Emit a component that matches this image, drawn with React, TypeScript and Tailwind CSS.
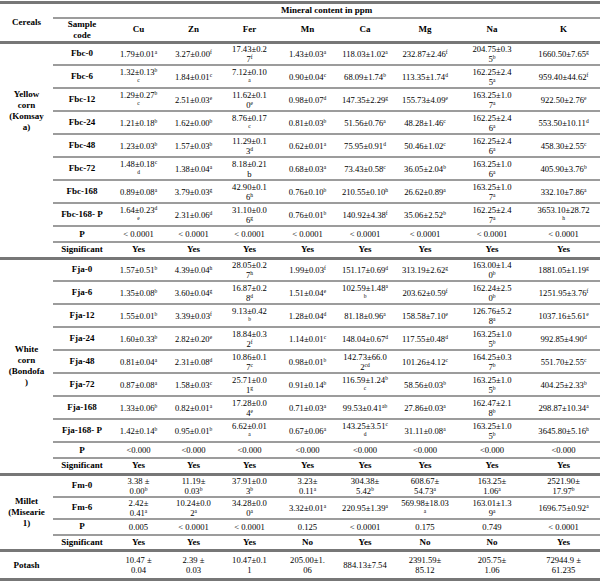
import React from "react";

// values: "|" = line break, ^{x} = superscript letter
const yellow: string[][] = [
  ["Fbc-0", "1.79±0.01^{a}", "3.27±0.00^{f}", "17.43±0.2|7^{f}", "1.43±0.03^{a}", "118.03±1.02^{a}", "232.87±2.46^{f}", "204.75±0.3|5^{b}", "1660.50±7.65^{g}"],
  ["Fbc-6", "1.32±0.13^{b}|^{c}", "1.84±0.01^{c}", "7.12±0.10|^{a}", "0.90±0.04^{c}", "68.09±1.74^{b}", "113.35±1.74^{d}", "162.25±2.4|5^{a}", "959.40±44.62^{f}"],
  ["Fbc-12", "1.29±0.27^{b}|^{c}", "2.51±0.03^{e}", "11.62±0.1|0^{e}", "0.98±0.07^{d}", "147.35±2.29^{g}", "155.73±4.09^{e}", "163.25±1.0|7^{a}", "922.50±2.76^{e}"],
  ["Fbc-24", "1.21±0.18^{b}", "1.62±0.00^{b}", "8.76±0.17|^{c}", "0.81±0.03^{b}", "51.56±0.76^{a}", "48.28±1.46^{c}", "162.25±2.4|6^{a}", "553.50±10.11^{d}"],
  ["Fbc-48", "1.23±0.03^{b}", "1.57±0.03^{b}", "11.29±0.1|3^{d}", "0.62±0.01^{a}", "75.95±0.91^{d}", "50.46±1.02^{c}", "162.25±2.4|6^{a}", "458.30±2.55^{c}"],
  ["Fbc-72", "1.48±0.18^{c}|^{d}", "1.38±0.04^{a}", "8.18±0.21|b", "0.68±0.03^{a}", "73.43±0.58^{c}", "36.05±2.04^{b}", "163.25±1.0|6^{a}", "405.90±3.76^{b}"],
  ["Fbc-168", "0.89±0.08^{a}", "3.79±0.03^{g}", "42.90±0.1|6^{h}", "0.76±0.10^{b}", "210.55±0.10^{h}", "26.62±0.89^{a}", "163.25±1.0|7^{a}", "332.10±7.86^{a}"],
  ["Fbc-168- P", "1.64±0.23^{d}|^{e}", "2.31±0.06^{d}", "31.10±0.0|6^{g}", "0.76±0.01^{b}", "140.92±4.38^{f}", "35.06±2.52^{b}", "162.25±2.4|7^{a}", "3653.10±28.72|^{h}"],
];

const white: string[][] = [
  ["Fja-0", "1.57±0.51^{b}", "4.39±0.04^{h}", "28.05±0.2|7^{h}", "1.99±0.03^{f}", "151.17±0.69^{d}", "313.19±2.62^{g}", "163.00±1.4|0^{b}", "1881.05±1.19^{g}"],
  ["Fja-6", "1.35±0.08^{b}", "3.60±0.04^{g}", "16.87±0.2|8^{d}", "1.51±0.04^{e}", "102.59±1.48^{a}|^{b}", "203.62±0.59^{f}", "162.24±2.5|0^{b}", "1251.95±3.76^{f}"],
  ["Fja-12", "1.55±0.01^{b}", "3.39±0.03^{f}", "9.13±0.42|^{b}", "1.28±0.04^{d}", "81.18±0.96^{a}", "158.58±7.10^{e}", "126.76±5.2|8^{a}", "1037.16±5.61^{e}"],
  ["Fja-24", "1.60±0.33^{b}", "2.82±0.20^{e}", "18.84±0.3|2^{f}", "1.14±0.01^{c}", "148.04±0.67^{d}", "117.55±0.48^{d}", "163.25±1.0|5^{b}", "992.85±4.90^{d}"],
  ["Fja-48", "0.81±0.04^{a}", "2.31±0.08^{d}", "10.86±0.1|7^{c}", "0.98±0.01^{b}", "142.73±66.0|2^{cd}", "101.26±4.12^{c}", "164.25±0.3|7^{b}", "551.70±2.55^{c}"],
  ["Fja-72", "0.87±0.08^{a}", "1.58±0.03^{c}", "25.71±0.0|1^{g}", "0.91±0.14^{b}", "116.59±1.24^{b}|^{c}", "58.56±0.03^{b}", "163.25±1.0|5^{b}", "404.25±2.33^{b}"],
  ["Fja-168", "1.33±0.06^{b}", "0.82±0.01^{a}", "17.28±0.0|4^{e}", "0.71±0.03^{a}", "99.53±0.41^{ab}", "27.86±0.03^{a}", "162.47±2.1|8^{b}", "298.87±10.34^{a}"],
  ["Fja-168- P", "1.42±0.14^{b}", "0.95±0.01^{b}", "6.62±0.01|^{a}", "0.67±0.06^{a}", "143.25±3.51^{c}|^{d}", "31.11±0.08^{a}", "163.25±1.0|5^{b}", "3645.80±5.16^{h}"],
];

const millet: string[][] = [
  ["Fm-0", "3.38 ±|0.00^{b}", "11.19±|0.03^{b}", "37.91±0.0|3^{b}", "3.23±|0.11^{a}", "304.38±|5.42^{b}", "608.67±|54.73^{a}", "163.25±|1.06^{a}", "2521.90±|17.97^{b}"],
  ["Fm-6", "2.42±|0.41^{a}", "10.24±0.0|2^{a}", "34.28±0.0|0^{a}", "3.32±0.01^{a}", "220.95±1.39^{a}", "569.98±18.03|^{a}", "163.01±1.3|9^{a}", "1696.75±0.92^{a}"],
];

const potash = ["10.47 ±|0.04", "2.39 ±|0.03", "10.47±0.1|1", "205.00±1.|06", "884.13±7.54", "2391.59±|85.12", "205.75±|1.06", "72944.9 ±|61.235"];

const minerals = ["Cu", "Zn", "Fer", "Mn", "Ca", "Mg", "Na", "K"];

const thin = "border-b-2 border-[#9c9c9c]";
const thick = "border-b-[3px] border-[#777777]";
const cell = "p-0 text-center align-middle whitespace-nowrap leading-[10px] text-[8.6px]";
const bold = "p-0 text-center align-middle whitespace-nowrap leading-[11px] text-[9px] font-bold";

function Val({ v }: { v: string }) {
  return (
    <>
      {v.split("|").map((line, i) => (
        <React.Fragment key={i}>
          {i > 0 && <br />}
          {line.split(/(\^\{[^}]*\})/).map((part, j) =>
            part.startsWith("^{") ? (
              <span key={j} className="relative -top-[3px] text-[5.5px] leading-none">
                {part.slice(2, -1)}
              </span>
            ) : (
              <React.Fragment key={j}>{part}</React.Fragment>
            )
          )}
        </React.Fragment>
      ))}
    </>
  );
}

function DataRow({ r }: { r: string[] }) {
  return (
    <>
      <td className={`${bold} ${thin}`}>{r[0]}</td>
      {r.slice(1).map((v, i) => (
        <td key={i} className={`${cell} ${thin}`}>
          <Val v={v} />
        </td>
      ))}
    </>
  );
}

function StatRows({ p, sig }: { p: string[]; sig: string[] }) {
  return (
    <>
      <tr className="h-[16px]">
        <td className={`${bold} ${thin}`}>P</td>
        {p.map((v, i) => (
          <td key={i} className={`${cell} ${thin}`}>{v}</td>
        ))}
      </tr>
      <tr className="h-[16px]">
        <td className={`${bold} ${thick}`}>Significant</td>
        {sig.map((v, i) => (
          <td key={i} className={`${bold} ${thick}`}>{v}</td>
        ))}
      </tr>
    </>
  );
}

function Group({ label, rows, p, sig, labelClass, rowH }: { label: React.ReactNode; rows: string[][]; p: string[]; sig: string[]; labelClass: string; rowH: string }) {
  return (
    <>
      {rows.map((r, i) => (
        <tr key={r[0]} className={rowH}>
          {i === 0 && (
            <td rowSpan={rows.length + 2} className={`${bold} ${thick} ${labelClass}`}>
              {label}
            </td>
          )}
          <DataRow r={r} />
        </tr>
      ))}
      <StatRows p={p} sig={sig} />
    </>
  );
}

export default function App() {
  const yes = Array(8).fill("Yes");
  return (
    <div className="w-[600px] h-[583px] bg-white text-black font-['Liberation_Serif',serif] pt-[1px]">
      <table className="w-[600px] table-fixed border-collapse">
        <colgroup>
          <col className="w-[53px]" />
          <col className="w-[58px]" />
          <col className="w-[55px]" />
          <col className="w-[55px]" />
          <col className="w-[57px]" />
          <col className="w-[59px]" />
          <col className="w-[56px]" />
          <col className="w-[64px]" />
          <col className="w-[70px]" />
          <col className="w-[73px]" />
        </colgroup>
        <tbody>
          <tr className="h-[15px]">
            <td rowSpan={2} className={`${bold} ${thick} border-t-[3px] border-t-[#777777]`}>Cereals</td>
            <td colSpan={9} className={`${bold} ${thin} border-t-[3px] border-t-[#777777]`}>Mineral content in ppm</td>
          </tr>
          <tr className="h-[24px]">
            <td className={`${bold} ${thick}`}>
              Sample
              <br />
              code
            </td>
            {minerals.map((m) => (
              <td key={m} className={`${bold} ${thick}`}>{m}</td>
            ))}
          </tr>
          <Group
            label={<>Yellow<br />corn<br />(Komsay<br />a)</>}
            rows={yellow}
            p={Array(8).fill("< 0.0001")}
            sig={yes}
            rowH="h-[23px]"
            labelClass="!align-top pt-[45px]"
          />
          <Group
            label={<>White<br />corn<br />(Bondofa<br />)</>}
            rows={white}
            p={Array(8).fill("<0.000")}
            sig={yes}
            rowH="h-[23px]"
            labelClass=""
          />
          <Group
            label={<>Millet<br />(Misearie<br />1)</>}
            rows={millet}
            p={["0.005", "< 0.0001", "< 0.0001", "0.125", "< 0.0001", "0.175", "0.749", "< 0.0001"]}
            sig={["Yes", "Yes", "Yes", "No", "Yes", "No", "No", "Yes"]}
            rowH="h-[22px]"
            labelClass=""
          />
          <tr className="h-[29px]">
            <td className={`${bold} ${thick}`}>Potash</td>
            <td className={`${cell} ${thick}`}></td>
            {potash.map((v, i) => (
              <td key={i} className={`${cell} ${thick}`}>
                <Val v={v} />
              </td>
            ))}
          </tr>
        </tbody>
      </table>
    </div>
  );
}
